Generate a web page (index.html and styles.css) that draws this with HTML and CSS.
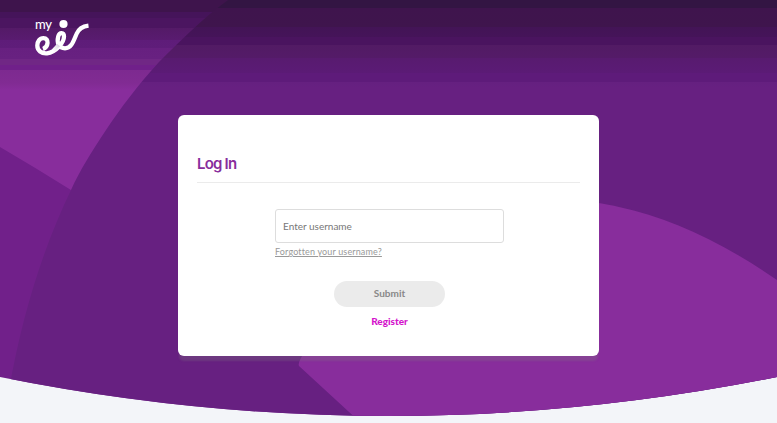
FILE: index.html
```html
<!DOCTYPE html>
<html lang="en">
<head>
    <meta charset="UTF-8">
    <meta name="viewport" content="width=device-width, initial-scale=1.0">
    <title>Log In</title>
    <link rel="stylesheet" href="styles.css">
</head>
<body>

<svg class="background" viewBox="0 0 777 423" preserveAspectRatio="none" aria-hidden="true">
    <defs>
        <clipPath id="curve">
            <path d="M0 0H777V377Q388.5 455 0 377Z"/>
        </clipPath>
        <linearGradient id="lightFade" gradientUnits="userSpaceOnUse" x1="0" y1="0" x2="0" y2="100">
            <stop offset="12%" stop-color="#3e144c"/>
            <stop offset="12%" stop-color="#45145a"/>
            <stop offset="18%" stop-color="#45145a"/>
            <stop offset="18%" stop-color="#4b1560"/>
            <stop offset="28%" stop-color="#4b1560"/>
            <stop offset="28%" stop-color="#541a67"/>
            <stop offset="40%" stop-color="#591b70"/>
            <stop offset="40%" stop-color="#5e1c79"/>
            <stop offset="48%" stop-color="#5f1d7a"/>
            <stop offset="48%" stop-color="#672080"/>
            <stop offset="59%" stop-color="#682181"/>
            <stop offset="59%" stop-color="#702785"/>
            <stop offset="65%" stop-color="#702785"/>
            <stop offset="65%" stop-color="#70208a"/>
            <stop offset="70%" stop-color="#70208a"/>
            <stop offset="70%" stop-color="#7d2a90"/>
            <stop offset="83%" stop-color="#812b93"/>
            <stop offset="90%" stop-color="#882d9c"/>
        </linearGradient>
        <linearGradient id="darkFade" gradientUnits="userSpaceOnUse" x1="0" y1="0" x2="0" y2="100">
            <stop offset="8%" stop-color="#331543"/>
            <stop offset="8%" stop-color="#3f144d"/>
            <stop offset="27%" stop-color="#3f154d"/>
            <stop offset="27%" stop-color="#431456"/>
            <stop offset="37%" stop-color="#451459"/>
            <stop offset="37%" stop-color="#4a145f"/>
            <stop offset="45%" stop-color="#4a145f"/>
            <stop offset="45%" stop-color="#521b64"/>
            <stop offset="58%" stop-color="#541b68"/>
            <stop offset="58%" stop-color="#581b6f"/>
            <stop offset="73%" stop-color="#5b1b76"/>
            <stop offset="73%" stop-color="#5e1b7a"/>
            <stop offset="82%" stop-color="#5e1b7a"/>
            <stop offset="82%" stop-color="#652080"/>
            <stop offset="88%" stop-color="#672081"/>
        </linearGradient>
    </defs>
    <g clip-path="url(#curve)">
        <rect width="777" height="423" fill="#71208a"/>
        <path d="M0 0H300V190H71Q36 168 0 147Z" fill="url(#lightFade)"/>
        <path d="M228 0C203 18 180 41 159 62C137 86 120 109 106 130C92 151 80 170 71 190C43 248 22 315 9 390V423H777V0Z" fill="url(#darkFade)"/>
        <path d="M560 199Q600 202 619 207C670 218 722 242 777 280V423H361L299 366Q298 364 300 360L330 300Z" fill="#882d9c"/>
    </g>
</svg>

<div class="page">
    <div class="logo">
        <span class="logo-my">my</span>
        <svg class="logo-eir" width="56" height="38" viewBox="0 0 56 38" role="img" aria-label="eir">
            <defs>
                <linearGradient id="shade" gradientUnits="userSpaceOnUse" x1="19" y1="32" x2="26" y2="25">
                    <stop offset="0" stop-color="#fff"/>
                    <stop offset="1" stop-color="#d9cce0"/>
                </linearGradient>
            </defs>
            <circle cx="29.5" cy="5" r="4.1"/>
            <path class="stroke" d="M9 30C14.500 28 15.500 19.300 9.500 19.200C5.500 19.200 3.300 22.500 3.300 26.500C3.300 31.500 7.500 34.800 13 34.300C22 33 30 23.500 30 17.500C30 13 25.500 12.800 24.200 17.500C22.500 24 25 29.300 31 29.300C37.500 29.300 39.500 22 42.500 15C44.500 10 48 7.400 54.500 6.600"/>
            <path class="fold" d="M19.500 31.500L24.500 26"/>
        </svg>
    </div>

    <div class="card">
        <h1 class="header">Log In</h1>
        <form id="loginForm" class="login-form">
            <input type="text" id="username" name="username" placeholder="Enter username" aria-label="Username" required>
            <a href="#" class="forgot">Forgotten your username?</a>
            <button type="submit" class="submit-btn" disabled>Submit</button>
            <a href="#" class="register">Register</a>
        </form>
    </div>
</div>

</body>
</html>
```

FILE: styles.css
```css
* {
    box-sizing: border-box;
}

body {
    font-family: Lato, "Open Sans", sans-serif;
    background-color: #f3f5f9;
    height: 100vh;
    margin: 0;
    overflow: hidden;
}

/* Curved backdrop behind the page */
.background {
    position: absolute;
    top: 0;
    left: 0;
    width: 100%;
    height: 100%;
}

.page {
    position: relative;
    display: flex;
    flex-direction: column;
    padding-top: 19px;
}

.logo {
    display: grid;
    width: 56px;
    height: 38px;
    margin: 0 0 58px 34px;
    color: #fff;
}

.logo-my,
.logo-eir {
    grid-area: 1 / 1;
}

.logo-my {
    font-size: 13px;
    font-weight: 500;
    line-height: 10px;
    letter-spacing: -0.3px;
    padding-left: 1px;
}

.logo-eir {
    fill: #fff;
}

.logo-eir .stroke {
    fill: none;
    stroke: #fff;
    stroke-width: 4.3;
}

.logo-eir .fold {
    stroke: url(#shade);
    stroke-width: 4;
}

.card {
    align-self: center;
    width: 421px;
    height: 241px;
    padding: 38px 19px 0;
    background-color: #fff;
    border-radius: 6px;
    box-shadow: 0 6px 2px -1px rgba(128, 128, 128, 0.25);
}

.header {
    height: 30px;
    margin: 0 0 26px;
    border-bottom: 1px solid #ebebeb;
    color: #882d9c;
    font-family: Inter, sans-serif;
    font-size: 15px;
    font-weight: 600;
    line-height: 22px;
    letter-spacing: -0.8px;
}

.login-form {
    display: flex;
    flex-direction: column;
    align-items: center;
    width: 229px;
    margin: 0 76px 0 78px;
}

.login-form input {
    width: 100%;
    height: 34px;
    padding: 0 7px 1px;
    border: 1px solid #ddd;
    border-radius: 3px;
    outline: none;
    font-family: inherit;
    font-size: 10px;
    letter-spacing: 0;
}

.login-form input::placeholder {
    color: #777;
}

.forgot {
    align-self: flex-start;
    margin-top: 2px;
    color: #999;
    font-size: 9px;
    line-height: 13px;
    letter-spacing: 0.15px;
}

.submit-btn {
    width: 111px;
    height: 26px;
    margin-top: 23px;
    padding: 0 0 2px;
    border: none;
    border-radius: 13px;
    background-color: #ebebeb;
    color: #888;
    font-family: inherit;
    font-size: 10px;
    font-weight: bold;
}

.register {
    margin-top: 7px;
    color: #d414cc;
    font-size: 10px;
    font-weight: 900;
    line-height: 14px;
    text-decoration: none;
}
```
